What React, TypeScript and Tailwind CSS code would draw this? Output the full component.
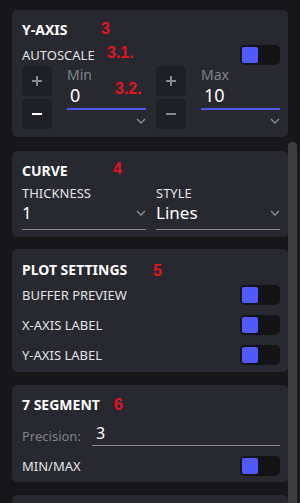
import React from "react";

const Toggle = () => (
  <div className="w-[40px] h-[20px] rounded-[5px] bg-[#141417] p-[2px] flex items-center">
    <div className="w-[16px] h-[16px] rounded-[2px] bg-[#4f5bff]" />
  </div>
);

const Chevron = () => (
  <svg width="10" height="6" viewBox="0 0 10 6" fill="none">
    <path d="M1 1 L5 5 L9 1" stroke="#8c8d92" strokeWidth="1.4" />
  </svg>
);

const Ann = ({ children, cls }: { children: React.ReactNode; cls: string }) => (
  <div
    className={`absolute text-[16px] leading-[16px] font-bold text-[#e8141c] ${cls}`}
    style={{ fontFamily: '"Liberation Sans", Arial, sans-serif' }}
  >
    {children}
  </div>
);

const Stepper = ({ minusWhite }: { minusWhite: boolean }) => (
  <div className="flex flex-col gap-[3px] w-[30px]">
    <div className="w-[30px] h-[30px] rounded-[4px] bg-[#1f2026] flex items-center justify-center">
      <svg width="10" height="10" viewBox="0 0 10 10">
        <rect x="0" y="4" width="10" height="2" fill="#8a8b90" />
        <rect x="4" y="0" width="2" height="10" fill="#8a8b90" />
      </svg>
    </div>
    <div className="w-[30px] h-[30px] rounded-[4px] bg-[#1f2026] flex items-center justify-center">
      <svg width="10" height="2" viewBox="0 0 10 2">
        <rect x="0" y="0" width="10" height="2" fill={minusWhite ? "#ffffff" : "#8a8b90"} />
      </svg>
    </div>
  </div>
);

const RangeInput = ({ label, value }: { label: string; value: string }) => (
  <div className="flex-1 flex flex-col">
    <div className="text-[14px] leading-[16px] text-[#80838c] mt-[1px]">{label}</div>
    <div className="text-[18px] leading-[24px] text-white pl-[3px]">{value}</div>
    <div className="h-[2px] bg-[#4a58f0] mt-[1px]" />
    <div className="flex justify-end mt-[8px]">
      <Chevron />
    </div>
  </div>
);

const SelectField = ({ label, value }: { label: string; value: string }) => (
  <div className="flex-1 flex flex-col">
    <div className="text-[13px] leading-[16px] text-[#e4e4e6]">{label}</div>
    <div className="flex items-center justify-between">
      <span className="text-[17px] leading-[24px] text-white">{value}</span>
      <Chevron />
    </div>
    <div className="h-[1px] bg-[#8a8a8e] mt-[4px]" />
  </div>
);

const Title = ({ children }: { children: React.ReactNode }) => (
  <div className="text-[14px] leading-[20px] font-bold text-white">{children}</div>
);

const Row = ({ label }: { label: string }) => (
  <div className="flex items-center justify-between h-[20px]">
    <span className="text-[13px] leading-[16px] text-[#e4e4e6]">{label}</span>
    <Toggle />
  </div>
);

export default function App() {
  return (
    <div
      className="w-[300px] h-[503px] bg-[#17171a] overflow-hidden relative"
      style={{ fontFamily: '"Noto Sans", "Open Sans", sans-serif' }}
    >
      <div className="pl-[12px] pt-[10px] w-[288px] flex flex-col gap-[12px]">
        {/* Y-AXIS */}
        <div className="relative bg-[#272830] rounded-[5px] pl-[10px] pr-[8px] pt-[10px] pb-[8px]">
          <Title>Y-AXIS</Title>
          <div className="flex items-center justify-between h-[20px] mt-[5px]">
            <span className="text-[13px] leading-[16px] text-[#e4e4e6]">AUTOSCALE</span>
            <Toggle />
          </div>
          <div className="flex gap-[10px] mt-[1px]">
            <div className="flex-1 flex gap-[15px]">
              <Stepper minusWhite={true} />
              <RangeInput label="Min" value="0" />
            </div>
            <div className="flex-1 flex gap-[15px]">
              <Stepper minusWhite={false} />
              <RangeInput label="Max" value="10" />
            </div>
          </div>
          <Ann cls="top-[11px] left-[89px]">3</Ann>
          <Ann cls="top-[35px] left-[95px]">3.1.</Ann>
          <Ann cls="top-[71px] left-[103px]">3.2.</Ann>
        </div>

        {/* CURVE */}
        <div className="relative mt-[2px] bg-[#272830] rounded-[5px] pl-[10px] pr-[8px] pt-[10px] pb-[7px]">
          <Title>CURVE</Title>
          <div className="flex gap-[10px] mt-[4px]">
            <SelectField label="THICKNESS" value="1" />
            <SelectField label="STYLE" value="Lines" />
          </div>
          <Ann cls="top-[10px] left-[101px]">4</Ann>
        </div>

        {/* PLOT SETTINGS */}
        <div className="relative bg-[#272830] rounded-[5px] pl-[10px] pr-[8px] pt-[11px] pb-[7px]">
          <Title>PLOT SETTINGS</Title>
          <div className="flex flex-col gap-[10px] mt-[5px]">
            <Row label="BUFFER PREVIEW" />
            <Row label="X-AXIS LABEL" />
            <Row label="Y-AXIS LABEL" />
          </div>
          <Ann cls="top-[14px] left-[141px]">5</Ann>
        </div>

        {/* 7 SEGMENT */}
        <div className="relative mt-[1px] bg-[#272830] rounded-[5px] pl-[10px] pr-[8px] pt-[10px] pb-[6px]">
          <Title>7 SEGMENT</Title>
          <div className="flex items-end mt-[8px]">
            <span className="text-[13px] leading-[20px] text-[#80838c] w-[70px]">Precision:</span>
            <div className="flex-1 flex flex-col">
              <span className="text-[16px] leading-[20px] text-white pl-[4px]">3</span>
              <div className="h-[1px] bg-[#8a8a8e] mt-[2px]" />
            </div>
          </div>
          <div className="mt-[10px]">
            <Row label="MIN/MAX" />
          </div>
          <Ann cls="top-[12px] left-[102px]">6</Ann>
        </div>

        <div className="mt-[1px] bg-[#272830] rounded-[5px] h-[40px]" />
      </div>

      <div className="absolute left-[288px] top-[142px] w-[9px] bottom-0 bg-[#3d3d3f] rounded-t-[4px]" />
    </div>
  );
}
